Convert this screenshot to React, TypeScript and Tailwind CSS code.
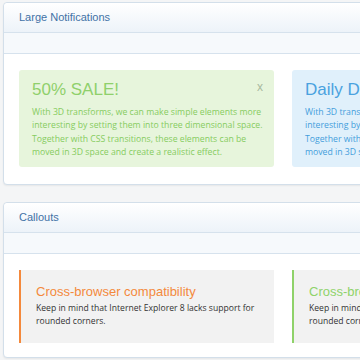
import React from 'react';

const sans = { fontFamily: '"Liberation Sans", Arial, sans-serif' };
const open = { fontFamily: '"Open Sans", sans-serif' };

const Panel: React.FC<{ title: string; children: React.ReactNode; className?: string }> = ({ title, children, className }) => (
    <div className={`w-[640px] ml-[3px] bg-white border border-[#d3dfea] rounded-[4px] shadow-[0_1px_2px_rgba(0,0,0,0.06)] ${className ?? ''}`}>
        <div className="h-[30px] flex items-center pl-[15px] bg-gradient-to-b from-white to-[#edf3f9] border-b border-[#d6e2ed] rounded-t-[4px]">
            <span className="text-[11px] text-[#4272a6]" style={sans}>{title}</span>
        </div>
        <div className="h-[21px] bg-[#f6f9fc] border-b border-[#d6e2ed]" />
        {children}
    </div>
);

const NoteText: React.FC<{ color: string }> = ({ color }) => (
    <p className={`mt-[4px] text-[8.7px] leading-[13.4px] whitespace-nowrap ${color}`} style={open}>
        With 3D transforms, we can make simple elements more<br />
        interesting by setting them into three dimensional space.<br />
        Together with CSS transitions, these elements can be<br />
        moved in 3D space and create a realistic effect.
    </p>
);

const App: React.FC = () => {
    return (
        <div className="w-[360px] h-[360px] overflow-hidden bg-[#f4f5f6] pt-[2px]">
            <Panel title="Large Notifications">
                <div className="flex gap-[18px] pl-[15px] pt-[16px] pb-[17px]">
                    <div className="relative w-[255px] h-[97px] shrink-0 rounded-[3px] bg-[#e7f5dc] px-[13px] pt-[8px] overflow-hidden">
                        <span className="absolute right-[11px] top-[8px] text-[12px] text-[#a9b9a0]" style={sans}>x</span>
                        <div className="text-[17px] text-[#8fd06b] leading-[24px]" style={sans}>50% SALE!</div>
                        <NoteText color="text-[#86cc60]" />
                    </div>
                    <div className="relative w-[255px] h-[97px] shrink-0 rounded-[3px] bg-[#e0f0fb] px-[13px] pt-[8px] overflow-hidden">
                        <div className="text-[17px] text-[#4aa2df] leading-[24px]" style={sans}>Daily Deal</div>
                        <NoteText color="text-[#449edc]" />
                    </div>
                </div>
            </Panel>
            <Panel title="Callouts" className="mt-[17px]">
                <div className="flex gap-[18px] pl-[15px] pt-[16px] pb-[14px]">
                    <div className="w-[255px] h-[73px] shrink-0 bg-[#f2f2f2] border-l-2 border-[#f4893c] pl-[15px] pt-[13px]">
                        <div className="text-[13px] text-[#f4893c] leading-[17px]" style={sans}>Cross-browser compatibility</div>
                        <p className="mt-[2px] text-[8.6px] leading-[13px] text-[#333333]" style={open}>
                            Keep in mind that Internet Explorer 8 lacks support for rounded corners.
                        </p>
                    </div>
                    <div className="w-[255px] h-[73px] shrink-0 bg-[#f2f2f2] border-l-2 border-[#8fd26a] pl-[15px] pt-[13px]">
                        <div className="text-[13px] text-[#8fd26a] leading-[17px]" style={sans}>Cross-browser compatibility</div>
                        <p className="mt-[2px] text-[8.6px] leading-[13px] text-[#333333]" style={open}>
                            Keep in mind that Internet Explorer 8 lacks support for rounded corners.
                        </p>
                    </div>
                </div>
            </Panel>
        </div>
    );
};

export default App;
